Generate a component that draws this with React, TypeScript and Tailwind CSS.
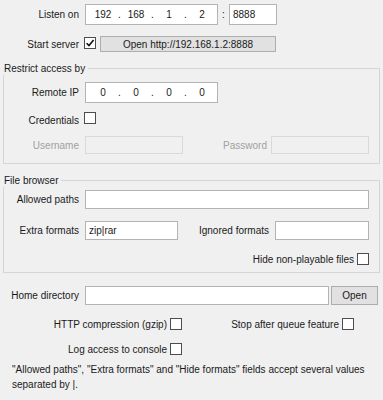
import React from "react";

const Check = ({ checked }: { checked?: boolean }) => (
  <span className="inline-flex w-[12px] h-[12px] border border-[#4d4d4d] bg-white items-center justify-center shrink-0">
    {checked && (
      <svg width="10" height="10" viewBox="0 0 10 10">
        <path d="M1.6 5.2 L4 7.6 L8.6 2" fill="none" stroke="#111" strokeWidth="1.6" />
      </svg>
    )}
  </span>
);

const IpBox = ({ parts }: { parts: string[] }) => (
  <div className="ml-[5px] w-[133px] h-[21px] bg-white border border-[#b4b4b4] flex items-center pl-[2px]">
    <span className="w-[30px] text-center">{parts[0]}</span>
    <span className="w-[3px] text-center">.</span>
    <span className="w-[30px] text-center">{parts[1]}</span>
    <span className="w-[3px] text-center">.</span>
    <span className="w-[30px] text-center">{parts[2]}</span>
    <span className="w-[3px] text-center">.</span>
    <span className="w-[30px] text-center">{parts[3]}</span>
  </div>
);

const Group = ({ title, children, className }: { title: string; children: React.ReactNode; className: string }) => (
  <div className={"relative ml-[3px] w-[377px] border border-[#d5d5d5] " + className}>
    <span className="absolute -left-[1px] -top-[7px] bg-[#f0f0f0] pl-[1px] pr-[3px] leading-[13px]">{title}</span>
    {children}
  </div>
);

export default function App() {
  return (
    <div className="w-[383px] h-[400px] bg-[#f0f0f0] text-[10px] text-[#1a1a1a] overflow-hidden flex flex-col font-['Liberation_Sans',Arial,sans-serif]">
      <div className="mt-[4px] h-[21px] flex items-center">
        <span className="w-[80px] text-right pr-[1px]">Listen on</span>
        <IpBox parts={["192", "168", "1", "2"]} />
        <span className="w-[11px] text-center">:</span>
        <div className="w-[48px] h-[21px] bg-white border border-[#b4b4b4] pl-[3px] flex items-center">8888</div>
      </div>

      <div className="mt-[11px] h-[16px] flex items-center">
        <span className="w-[80px] text-right pr-[1px]">Start server</span>
        <span className="ml-[4px]"><Check checked /></span>
        <button className="ml-[4px] w-[176px] h-[16px] bg-[#e1e1e1] border border-[#adadad] flex items-center justify-center">
          Open http://192.168.1.2:8888
        </button>
      </div>

      <Group title="Restrict access by" className="mt-[16px] pt-[13px] pb-[9px]">
        <div className="h-[21px] flex items-center">
          <span className="w-[76px] text-right pr-[1px]">Remote IP</span>
          <IpBox parts={["0", "0", "0", "0"]} />
        </div>
        <div className="mt-[10px] h-[14px] flex items-center">
          <span className="w-[76px] text-right pr-[1px]">Credentials</span>
          <span className="ml-[4px]"><Check /></span>
        </div>
        <div className="mt-[9px] h-[18px] flex items-center text-[#a0a0a0]">
          <span className="w-[76px] text-right pr-[1px]">Username</span>
          <div className="ml-[5px] w-[98px] h-[18px] border border-[#d9d9d9] bg-[#f0f0f0]" />
          <span className="w-[85px] text-right pr-[1px]">Password</span>
          <div className="ml-[3px] w-[98px] h-[18px] border border-[#d9d9d9] bg-[#f0f0f0]" />
        </div>
      </Group>

      <Group title="File browser" className="mt-[16px] pt-[9px] pb-[6px]">
        <div className="h-[19px] flex items-center">
          <span className="w-[76px] text-right pr-[1px]">Allowed paths</span>
          <div className="ml-[5px] w-[284px] h-[19px] bg-white border border-[#b4b4b4]" />
        </div>
        <div className="mt-[12px] h-[19px] flex items-center">
          <span className="w-[76px] text-right pr-[1px]">Extra formats</span>
          <div className="ml-[5px] w-[93px] h-[19px] bg-white border border-[#b4b4b4] pl-[3px] flex items-center">zip|rar</div>
          <span className="w-[92px] text-right pr-[1px]">Ignored formats</span>
          <div className="ml-[5px] w-[94px] h-[19px] bg-white border border-[#b4b4b4]" />
        </div>
        <div className="mt-[12px] h-[14px] flex items-center justify-end pr-[10px] gap-[3px]">
          <span>Hide non-playable files</span>
          <Check />
        </div>
      </Group>

      <div className="mt-[13px] h-[19px] flex items-center">
        <span className="w-[80px] text-right pr-[1px]">Home directory</span>
        <div className="ml-[5px] w-[244px] h-[19px] bg-white border border-[#b4b4b4]" />
        <button className="ml-[2px] w-[47px] h-[19px] bg-[#e1e1e1] border border-[#adadad] flex items-center justify-center">Open</button>
      </div>

      <div className="mt-[12px] h-[14px] flex items-center">
        <div className="w-[182px] flex items-center justify-end gap-[3px]">
          <span>HTTP compression (gzip)</span>
          <Check />
        </div>
        <div className="w-[172px] flex items-center justify-end gap-[3px]">
          <span>Stop after queue feature</span>
          <Check />
        </div>
      </div>

      <div className="mt-[11px] h-[14px] flex items-center">
        <div className="w-[182px] flex items-center justify-end gap-[3px]">
          <span>Log access to console</span>
          <Check />
        </div>
      </div>

      <div className="mt-[6px] pl-[12px] leading-[15px]">
        "Allowed paths", "Extra formats" and "Hide formats" fields accept several values
        <br />
        separated by |.
      </div>
    </div>
  );
}
